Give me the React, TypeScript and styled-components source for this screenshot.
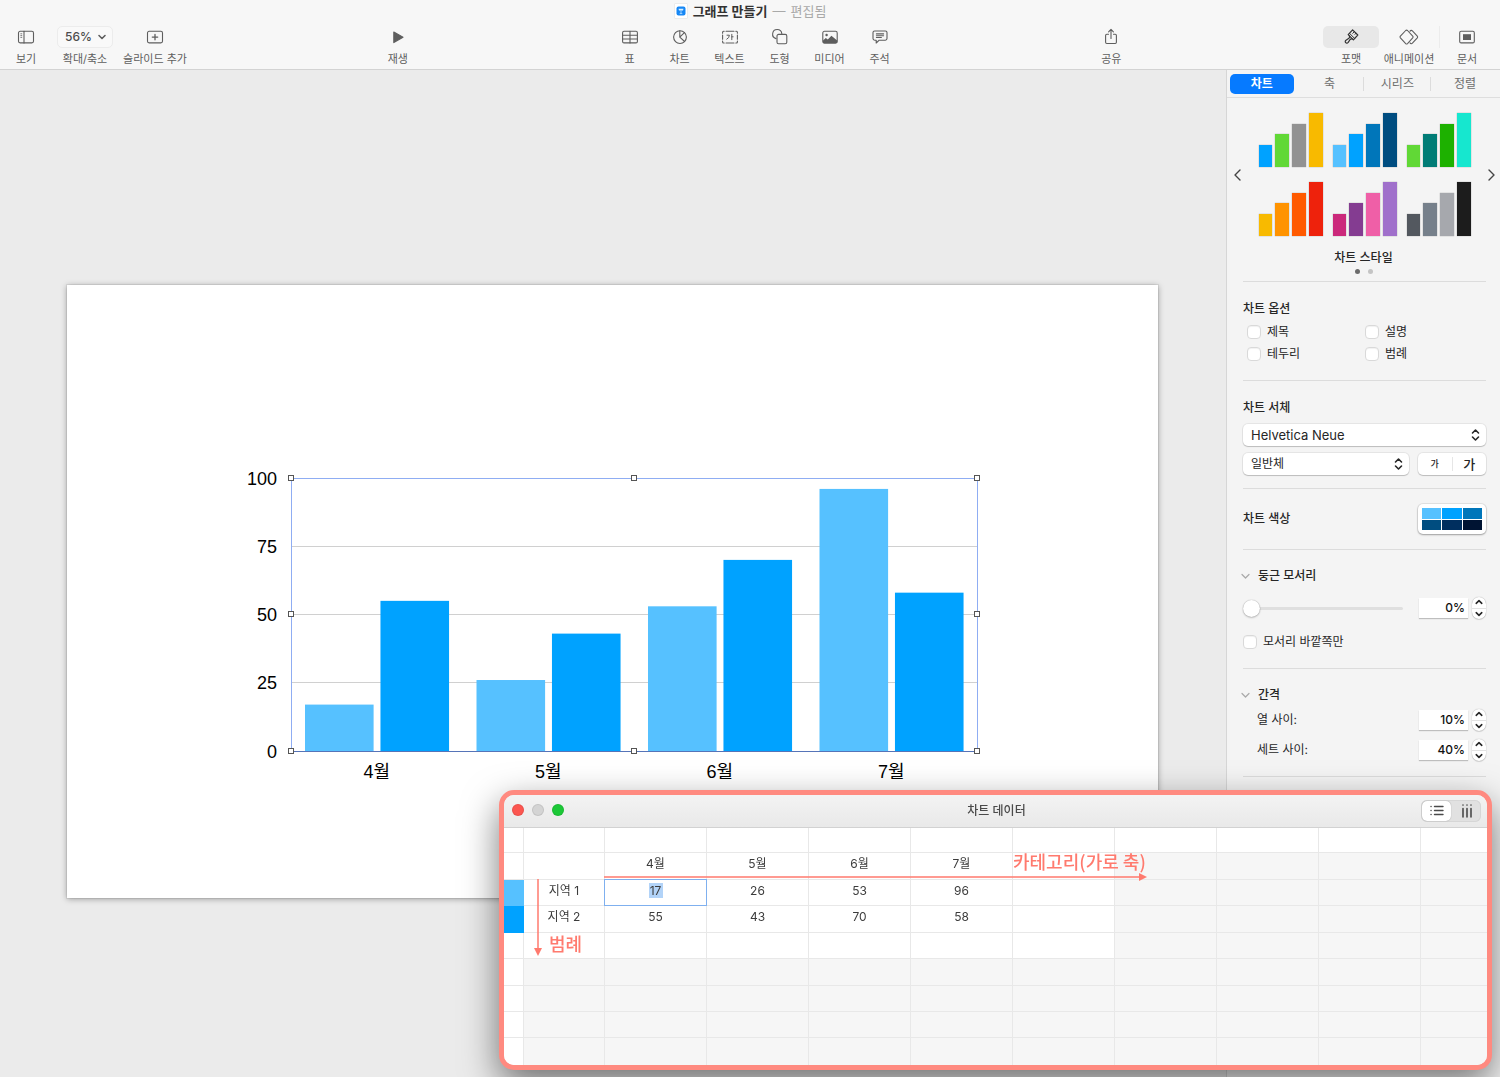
import React from "react";
import styled, { createGlobalStyle } from "styled-components";

const ui = `Inter, "Noto Sans CJK KR", sans-serif`;
const salmon = "#ff8a80";

const GlobalStyle = createGlobalStyle`
  *, *::before, *::after { box-sizing: border-box; }
  body { margin: 0; background: #ebebeb; color: #262626; font: 12px/20px ${ui}; }
  button, input, select { font: inherit; color: inherit; margin: 0; padding: 0; border: 0; background: none; outline: 0; }
  svg { display: block; flex: none; }
`;

const Page = styled.div`
  min-height: 100vh;
  display: flex;
  flex-direction: column;
  overflow: hidden;
`;

/* ---------- header ---------- */

const Header = styled.header`
  display: flex;
  flex-direction: column;
  gap: 4px;
  padding-bottom: 3px;
  background: #f7f7f7;
  border-bottom: 1px solid #d3d3d3;
`;

const TitleBar = styled.div`
  display: flex;
  align-items: center;
  justify-content: center;
  gap: 5px;
  height: 22px;
  font-size: 13px;
  color: #a9a9a9;
`;

const DocTitle = styled.h1`
  margin: 0;
  font-size: 13px;
  font-weight: 700;
  color: #333;
`;

const Toolbar = styled.div`
  display: flex;
  justify-content: space-between;
  padding: 0 10px 0 6px;
`;

const ToolGroup = styled.div<{ $gap?: number }>`
  display: flex;
  gap: ${(p) => p.$gap ?? 10}px;
`;

const Tool = styled.div<{ $width?: number }>`
  display: flex;
  flex-direction: column;
  align-items: center;
  gap: 4px;
  width: ${(p) => p.$width ?? 40}px;
  font-size: 11px;
  line-height: 14px;
  color: #5e5e5e;
  white-space: nowrap;
`;

const ToolButton = styled.button`
  display: flex;
  flex-direction: column;
  align-items: center;
  gap: 4px;
  width: 100%;
`;

const IconBox = styled.span<{ $active?: boolean }>`
  display: flex;
  align-items: center;
  justify-content: center;
  width: 100%;
  height: 22px;
  border-radius: 5px;
  background: ${(p) => (p.$active ? "#e8e8e8" : "transparent")};
  color: ${(p) => (p.$active ? "#333" : "#5e5e5e")};
`;

const ToolDivider = styled.span`
  width: 1px;
  height: 22px;
  background: #ececec;
`;

const SelectWrap = styled.span`
  position: relative;
  display: block;
  width: 100%;

  svg {
    position: absolute;
    top: 50%;
    right: 6px;
    transform: translateY(-50%);
    pointer-events: none;
  }
`;

const ZoomSelect = styled.select`
  appearance: none;
  width: 100%;
  height: 22px;
  padding-left: 7px;
  border: 1px solid #ececec;
  border-radius: 5px;
  background: #f9f9f9;
  font-size: 12px;
  font-weight: 500;
  color: #4c4c4c;
`;

/* ---------- body ---------- */

const Body = styled.div`
  flex: 1;
  display: flex;
`;

const Canvas = styled.main`
  flex: 1;
  min-width: 0;
  padding: 215px 68px 0 67px;
`;

const Slide = styled.section`
  aspect-ratio: 1091 / 613;
  padding: 180px 173px 0;
  background: #fff;
  box-shadow: 0 0 0 1px rgba(0, 0, 0, 0.06), 0 1px 6px rgba(0, 0, 0, 0.35);

  > svg {
    width: 100%;
    height: auto;
    overflow: visible;
  }
`;

const AxisText = styled.text`
  font: 18px "Liberation Sans", "Noto Sans CJK KR", sans-serif;
  fill: #000;
`;

/* ---------- inspector ---------- */

const Inspector = styled.aside`
  width: 274px;
  flex: none;
  background: #f4f4f4;
  border-left: 1px solid #d6d6d6;
`;

const Tabs = styled.nav`
  display: grid;
  grid-template-columns: repeat(4, 1fr);
  align-items: center;
  height: 28px;
  padding: 0 1px;
  border-bottom: 1px solid #dedede;
`;

const Tab = styled.button<{ $active?: boolean; $divided?: boolean }>`
  height: ${(p) => (p.$active ? 20 : 14)}px;
  margin: 0 ${(p) => (p.$active ? 2 : 0)}px;
  border-radius: ${(p) => (p.$active ? 5 : 0)}px;
  background: ${(p) => (p.$active ? "#067aff" : "none")};
  color: ${(p) => (p.$active ? "#fff" : "#6e6e6e")};
  font-weight: ${(p) => (p.$active ? 700 : 400)};
  line-height: 14px;
  box-shadow: ${(p) => (p.$divided ? "inset -1px 0 #dcdcdc" : "none")};
`;

const StylePicker = styled.div`
  display: flex;
  align-items: center;
  justify-content: space-between;
  padding: 15px 4px 0 6px;
`;

const Pager = styled.button`
  display: flex;
  color: #444;
`;

const StyleGrid = styled.div`
  display: grid;
  grid-template-columns: repeat(3, 64px);
  gap: 15px 10px;
`;

const StyleThumb = styled.button`
  display: grid;
  grid-template-columns: repeat(4, 1fr);
  gap: 3px;
  align-items: end;
  height: 54px;
`;

const ThumbBar = styled.span<{ $color: string; $height: number }>`
  height: ${(p) => p.$height}px;
  background: ${(p) => p.$color};
  box-shadow: 0 0 1px rgba(0, 0, 0, 0.4);
`;

const StyleCaption = styled.div`
  display: flex;
  flex-direction: column;
  align-items: center;
  gap: 1px;
  padding: 12px 0 7px;
  font-weight: 500;
`;

const Dots = styled.div`
  display: flex;
  gap: 8px;
`;

const Dot = styled.span<{ $on?: boolean }>`
  width: 5px;
  height: 5px;
  border-radius: 50%;
  background: ${(p) => (p.$on ? "#6b6b6b" : "#c4c4c4")};
`;

const Section = styled.section<{ $gap: number; $top?: number; $bottom?: number }>`
  display: flex;
  flex-direction: column;
  gap: ${(p) => p.$gap}px;
  margin: 0 14px 0 16px;
  padding: ${(p) => p.$top ?? 17}px 0 ${(p) => p.$bottom ?? 15}px;
  border-top: 1px solid #dcdcdc;
`;

const Heading = styled.h2<{ $open?: boolean }>`
  display: flex;
  align-items: center;
  gap: 8px;
  margin: 0 0 0 ${(p) => (p.$open ? -2 : 0)}px;
  font-size: 12px;
  line-height: 18px;
  font-weight: 500;
  color: #262626;

  svg { color: #a8a8a8; }
`;

const CheckGrid = styled.div`
  display: grid;
  grid-template-columns: 118px 1fr;
  padding-left: 4px;
`;

const CheckLabel = styled.label`
  display: flex;
  align-items: center;
  gap: 6px;
  height: 22px;
`;

const CheckBox = styled.input`
  appearance: none;
  width: 14px;
  height: 14px;
  border-radius: 4px;
  border: 1px solid #d9d9d9;
  background: #fff;
  box-shadow: inset 0 1px 1px rgba(0, 0, 0, 0.06);
`;

const Rows = styled.div`
  display: flex;
  flex-direction: column;
  gap: 8px;
`;

const Row = styled.div<{ $indent?: number }>`
  display: flex;
  align-items: center;
  justify-content: space-between;
  gap: 9px;
  padding-left: ${(p) => p.$indent ?? 0}px;
`;

const FormSelect = styled.select<{ $size?: number }>`
  appearance: none;
  display: block;
  width: 100%;
  height: 22px;
  padding-left: 8px;
  border-radius: 5px;
  background: #fff;
  font-size: ${(p) => p.$size ?? 12}px;
  line-height: 20px;
  box-shadow: 0 0 0 1px rgba(0, 0, 0, 0.06), 0 1px 1px rgba(0, 0, 0, 0.18);
`;

const Segments = styled.div`
  display: flex;
  align-items: center;
  flex: none;
  width: 68px;
  height: 22px;
  border-radius: 5px;
  background: #fff;
  box-shadow: 0 0 0 1px rgba(0, 0, 0, 0.06), 0 1px 1px rgba(0, 0, 0, 0.18);

  button { flex: 1; height: 14px; line-height: 14px; font-weight: 500; }
  button + button { border-left: 1px solid #e6e6e6; }
`;

const SizeButton = styled.button<{ $size: number }>`
  font-size: ${(p) => p.$size}px;
`;

const ColorWell = styled.button`
  display: grid;
  grid-template-columns: repeat(3, 1fr);
  gap: 1px;
  width: 68px;
  height: 30px;
  padding: 4px;
  border-radius: 5px;
  background: #fff;
  box-shadow: 0 0 0 1px rgba(0, 0, 0, 0.07), 0 1px 2px rgba(0, 0, 0, 0.3);
`;

const Swatch = styled.span<{ $color: string }>`
  height: 100%;
  min-height: 10px;
  background: ${(p) => p.$color};
`;

const Slider = styled.input`
  appearance: none;
  width: 160px;
  height: 20px;

  &::-webkit-slider-runnable-track {
    height: 3px;
    border-radius: 2px;
    background: #dfdfdf;
  }
  &::-webkit-slider-thumb {
    appearance: none;
    width: 17px;
    height: 17px;
    margin-top: -7px;
    border-radius: 50%;
    background: #fff;
    box-shadow: 0 0 1px rgba(0, 0, 0, 0.4), 0 1px 2px rgba(0, 0, 0, 0.2);
  }
`;

const NumberGroup = styled.span`
  display: flex;
  align-items: center;
  gap: 4px;
`;

const NumberInput = styled.input`
  width: 49px;
  height: 20px;
  padding-right: 3px;
  background: #fff;
  text-align: right;
  font-weight: 500;
  color: #111;
  box-shadow: 0 1px 1px rgba(0, 0, 0, 0.22);
`;

const Stepper = styled.span`
  display: flex;
  flex-direction: column;
  width: 14px;
  height: 22px;
  border-radius: 7px;
  background: #fff;
  overflow: hidden;
  box-shadow: 0 0 1px rgba(0, 0, 0, 0.4), 0 1px 1px rgba(0, 0, 0, 0.12);

  button { flex: 1; display: flex; align-items: center; justify-content: center; }
  button + button { border-top: 1px solid #e2e2e2; }
`;

/* ---------- chart data window ---------- */

const DataWindow = styled.section`
  position: fixed;
  right: 8px;
  bottom: 7px;
  width: 993px;
  border: 5px solid ${salmon};
  border-radius: 15px;
  background: #f6f6f6;
  box-shadow: 0 14px 36px rgba(0, 0, 0, 0.52);
`;

const WindowBar = styled.div`
  display: grid;
  grid-template-columns: 1fr auto 1fr;
  align-items: center;
  height: 33px;
  padding: 0 6px 0 8px;
  border-bottom: 1px solid #d2d2d2;
  border-radius: 10px 10px 0 0;
  background: linear-gradient(#f3f3f3, #e9e9e9);
  color: #4a4a4a;
`;

const Lights = styled.div`
  display: flex;
  gap: 8px;
  padding-bottom: 2px;
`;

const Light = styled.button<{ $color: string }>`
  width: 12px;
  height: 12px;
  border-radius: 50%;
  background: ${(p) => p.$color};
  box-shadow: inset 0 0 0 1px rgba(0, 0, 0, 0.08);
`;

const WindowTitle = styled.h2`
  margin: 0;
  font-size: 12px;
  font-weight: 500;
`;

const ViewToggle = styled.div`
  justify-self: end;
  display: flex;
  width: 60px;
  height: 22px;
  border-radius: 6px;
  background: #e1e1e1;
  box-shadow: inset 0 0 0 1px #d6d6d6;
`;

const ViewButton = styled.button<{ $active?: boolean }>`
  flex: 1;
  display: flex;
  align-items: center;
  justify-content: center;
  margin: ${(p) => (p.$active ? 1 : 0)}px;
  border-radius: 5px;
  background: ${(p) => (p.$active ? "#fff" : "none")};
  box-shadow: ${(p) => (p.$active ? "0 0 1px rgba(0, 0, 0, 0.4)" : "none")};
`;

const Sheet = styled.div`
  position: relative;
  overflow: hidden;
  border-radius: 0 0 10px 10px;
`;

const Table = styled.table`
  width: 100%;
  height: 237px;
  table-layout: fixed;
  border-collapse: separate;
  border-spacing: 0;
`;

const TableRow = styled.tr<{ $first?: boolean }>`
  height: ${(p) => (p.$first ? 25 : 26)}px;
`;

const Cell = styled.td<{ $filled?: boolean; $selected?: boolean }>`
  padding: 0 0 4px;
  border: solid ${(p) => (p.$selected ? "#7fb0ef" : "#e8e8e8")};
  border-width: 0 1px 1px 0;
  background: ${(p) => (p.$filled ? "#fff" : "#f6f6f6")};
  box-shadow: ${(p) => (p.$selected ? "-1px 0 #7fb0ef, 0 -1px #7fb0ef, -1px -1px #7fb0ef" : "none")};
  position: ${(p) => (p.$selected ? "relative" : "static")};
  text-align: center;
  line-height: 16px;
  font-weight: 400;
  color: #3c3c3c;

  &:last-child { border-right: 0; }
  tr:last-child > & { border-bottom: 0; }
`;

const ColorCell = styled(Cell)<{ $color?: string }>`
  background: ${(p) => p.$color ?? "#fff"};
  border-color: ${(p) => p.$color ?? "#e8e8e8"};
`;

const CellInput = styled.input`
  display: block;
  width: 14px;
  height: 15px;
  margin: 0 auto;
  background: #b2d3f8;
  text-align: center;
`;

const Note = styled.span<{ $x: number; $y: number }>`
  position: absolute;
  left: ${(p) => p.$x}px;
  top: ${(p) => p.$y}px;
  font: 500 18px/24px "Noto Sans CJK KR", sans-serif;
  color: #ff7a6e;
  white-space: nowrap;
`;

const Arrows = styled.svg`
  position: absolute;
  left: 0;
  top: 0;
  pointer-events: none;
`;

/* ---------- icons ---------- */

type IconProps = { w?: number; h?: number; children: React.ReactNode };
const Icon = ({ w = 18, h = 18, children }: IconProps) => (
  <svg width={w} height={h} viewBox={`0 0 ${w} ${h}`} fill="none" stroke="currentColor" strokeWidth="1.1" strokeLinecap="round" strokeLinejoin="round" aria-hidden="true">
    {children}
  </svg>
);

const ViewIcon = () => (
  <Icon><rect x="1.5" y="3.3" width="15" height="11.6" rx="1.6" /><path d="M7 3.3v11.6" /><path d="M3.8 5.8h1M3.8 7.6h1M3.8 9.4h1" strokeWidth=".8" /></Icon>
);
const AddSlideIcon = () => (
  <Icon><rect x="1.5" y="3.3" width="15" height="11.6" rx="1.6" /><path d="M9 6.4v5.4M6.3 9.1h5.4" strokeWidth="1.3" /></Icon>
);
const PlayIcon = () => (
  <Icon><path d="M4.8 4v10.6L14 9.3z" fill="currentColor" /></Icon>
);
const TableIcon = () => (
  <Icon><rect x="1.6" y="3.3" width="14.8" height="11.6" rx="1.4" /><path d="M1.6 7.2h14.8M1.6 11h14.8M9 3.3v11.6" /></Icon>
);
const ChartIcon = () => (
  <Icon><circle cx="9" cy="9.1" r="6.4" /><path d="M8.8 2.7v6.4l4.8 4.4M8.8 9.1l4.6-4.4" /></Icon>
);
const TextIcon = () => (
  <Icon>
    <path d="M3.2 3.2h-.6q-1 0-1 1v1M14.8 3.2h.6q1 0 1 1v1M3.2 15h-.6q-1 0-1-1v-1M14.8 15h.6q1 0 1-1v-1M5 3.2h8M5 15h8M1.6 7v4.2M16.4 7v4.2" />
    <path d="M6 7.2h2.4q0 2.6-2.6 4M10.8 6.3v5.4M10.8 8.8h1.3" strokeWidth="1" />
  </Icon>
);
const ShapeIcon = () => (
  <Icon><path d="M5 10.6A4.6 4.6 0 1 1 10.8 5.6" /><rect x="6" y="6.4" width="9.8" height="9.4" rx="1.6" /></Icon>
);
const MediaIcon = () => (
  <Icon>
    <rect x="1.8" y="3.3" width="14.4" height="11.8" rx="1.6" />
    <circle cx="5.6" cy="7" r="1.2" fill="currentColor" stroke="none" />
    <path d="M2 12.4l2.8-2.3 2 1.4 3.6-3.8 5.8 4.8v2q0 .6-.8.6H2.6q-.6 0-.6-.6z" fill="currentColor" stroke="none" />
  </Icon>
);
const CommentIcon = () => (
  <Icon><path d="M3.6 3h10.8q1.6 0 1.6 1.6v6q0 1.6-1.6 1.6H8.2L5.2 15v-2.8H3.6Q2 12.2 2 10.6v-6Q2 3 3.6 3zM5.4 5.9h7.2M5.4 7.7h7.2M5.4 9.5h5" /></Icon>
);
const ShareIcon = () => (
  <Icon><path d="M6.5 6.3H4.8q-1.2 0-1.2 1.2v6.8q0 1.2 1.2 1.2h8.4q1.2 0 1.2-1.2V7.5q0-1.2-1.2-1.2h-1.7M9 10.5V1.5M6.6 3.8L9 1.4l2.4 2.4" /></Icon>
);
const BrushIcon = () => (
  <Icon>
    <path d="M10.6 1.8L15.8 7 11.4 11.8 6.2 6.600z" strokeWidth="1.2" />
    <path d="M12.400 3.600l-1.600 1.700M14 5.200l-1 1.100M7.500 5.300l5.200 5.200" strokeWidth="1" />
    <path d="M7.400 7.900q.6 1.500-.5 2.400L4 12.200q-1.400 1.400-.3 2.500t2.500-.3l1.900-2.900q.9-1.100 2.400-.5" strokeWidth="1.200" />
  </Icon>
);
const MotionIcon = () => (
  <Icon w={20}>
    <path d="M6.7 2.5q.9-.8 1.8 0l5.2 5.700q.7.800 0 1.700L8.500 15.600q-.9.800-1.800 0L1.400 9.900q-.7-.8 0-1.700z" />
    <path d="M11 3.200q1.200-1.500 2.400-.3l4.900 5.300q.7.800 0 1.700l-4.900 5.300q-1.200 1.200-2.400-.3" />
  </Icon>
);
const DocIcon = () => (
  <Icon><rect x="1.7" y="3.3" width="14.6" height="11.6" rx="1.4" /><rect x="5" y="6.2" width="8" height="5.8" fill="currentColor" stroke="none" /></Icon>
);
const AppIcon = () => (
  <svg width="14" height="16" viewBox="0 0 14 16" aria-hidden="true">
    <rect x=".5" y=".5" width="13" height="15" rx="1" fill="#fff" stroke="#e2e2e2" strokeWidth=".6" />
    <rect x="2.5" y="3.5" width="9" height="9" rx="2" fill="#1687f5" />
    <path d="M4.5 5.8h5l-.5 1.8H5z" fill="#d9efff" />
    <path d="M7 7.6v2.8M5.7 10.6h2.6" stroke="#bfe3ff" strokeWidth=".8" />
  </svg>
);
const Chevron = ({ d, w = 10, h = 10, s = 1.6 }: { d: string; w?: number; h?: number; s?: number }) => (
  <svg width={w} height={h} viewBox={`0 0 ${w} ${h}`} fill="none" stroke="currentColor" strokeWidth={s} strokeLinecap="round" strokeLinejoin="round" aria-hidden="true">
    <path d={d} />
  </svg>
);
const UpDown = () => <Chevron w={9} h={14} d="M1.5 5L4.5 2 7.5 5M1.5 9L4.5 12 7.5 9" />;

/* ---------- data ---------- */

const months = ["4월", "5월", "6월", "7월"];
const series = [
  { name: "지역 1", color: "#56c1ff", values: [17, 26, 53, 96] },
  { name: "지역 2", color: "#00a2ff", values: [55, 43, 70, 58] },
];

const chartStyles = [
  ["#00a2ff", "#61d836", "#929292", "#f8ba00"],
  ["#56c1ff", "#00a2ff", "#0076ba", "#004d80"],
  ["#61d836", "#017c76", "#1db100", "#16e7cf"],
  ["#f8ba00", "#ff9300", "#ff5a00", "#ee220c"],
  ["#cb297b", "#843c91", "#ef5fa7", "#a070cb"],
  ["#53585f", "#76808b", "#a6a8ad", "#1c1c1c"],
];
const thumbHeights = [22, 33, 43, 54];
const wellColors = ["#56c1ff", "#00a2ff", "#0076ba", "#004d80", "#002f5f", "#001433"];

const insertTools: [string, React.FC][] = [
  ["표", TableIcon],
  ["차트", ChartIcon],
  ["텍스트", TextIcon],
  ["도형", ShapeIcon],
  ["미디어", MediaIcon],
  ["주석", CommentIcon],
];

/* ---------- parts ---------- */

const ToolItem = ({ label, icon: Glyph, width, active }: { label: string; icon: React.FC; width?: number; active?: boolean }) => (
  <Tool $width={width}>
    <ToolButton type="button">
      <IconBox $active={active}><Glyph /></IconBox>
      {label}
    </ToolButton>
  </Tool>
);

const plot = { left: 51, top: 13, width: 686, height: 273 };

const BarChart = () => {
  const groupWidth = plot.width / months.length;
  const barWidth = groupWidth * 0.4;
  const baseline = plot.top + plot.height;
  const xs = [plot.left, plot.left + plot.width / 2, plot.left + plot.width];
  const ys = [plot.top, plot.top + Math.floor(plot.height / 2), baseline];
  return (
    <svg viewBox="0 0 745 325" role="img" aria-label="월별 지역 차트">
      {[100, 75, 50, 25, 0].map((v) => {
        const y = Math.floor(baseline - (v / 100) * plot.height);
        return (
          <g key={v}>
            <line x1={plot.left} x2={plot.left + plot.width} y1={y + 0.5} y2={y + 0.5} stroke="#d0d0d0" />
            <AxisText x="37" y={y + 7} textAnchor="end">{v}</AxisText>
          </g>
        );
      })}
      {months.map((m, i) => (
        <g key={m}>
          {series.map((s, j) => {
            const h = (s.values[i] / 100) * plot.height;
            return <rect key={s.name} x={plot.left + 14 + i * groupWidth + j * barWidth * 1.1} y={baseline - h} width={barWidth} height={h} fill={s.color} />;
          })}
          <AxisText x={plot.left + groupWidth * (i + 0.5)} y="313" textAnchor="middle">{m}</AxisText>
        </g>
      ))}
      <rect x={plot.left + 0.5} y={plot.top + 0.5} width={plot.width} height={plot.height} fill="none" stroke="#8fadf3" />
      <line x1={plot.left} x2={plot.left + plot.width} y1={baseline + 0.5} y2={baseline + 0.5} stroke="#5674b8" />
      {xs.map((x, i) =>
        ys.map((y, j) =>
          i === 1 && j === 1 ? null : (
            <rect key={`${i}-${j}`} x={x - 2.5} y={y - 2.5} width="5" height="5" fill="#fff" stroke="#555" />
          )
        )
      )}
    </svg>
  );
};

const Percent = ({ id, label, value }: { id: string; label?: string; value: string }) => (
  <NumberGroup>
    <NumberInput id={id} aria-label={label} defaultValue={value} />
    <Stepper>
      <button type="button" aria-label="증가"><Chevron w={8} h={6} d="M1.2 4.3L4 1.7 6.8 4.3" /></button>
      <button type="button" aria-label="감소"><Chevron w={8} h={6} d="M1.2 1.7L4 4.3 6.8 1.7" /></button>
    </Stepper>
  </NumberGroup>
);

const Check = ({ label }: { label: string }) => (
  <CheckLabel><CheckBox type="checkbox" />{label}</CheckLabel>
);

const OpenArrow = () => <Chevron w={9} h={8} s={1.2} d="M1 2.5L4.5 6 8 2.5" />;

const InspectorPanel = () => (
  <Inspector>
    <Tabs>
      <Tab type="button" $active>차트</Tab>
      <Tab type="button" $divided>축</Tab>
      <Tab type="button" $divided>시리즈</Tab>
      <Tab type="button">정렬</Tab>
    </Tabs>
    <StylePicker>
      <Pager type="button" aria-label="이전"><Chevron w={9} h={14} s={1.4} d="M7 2L2 7 7 12" /></Pager>
      <StyleGrid>
        {chartStyles.map((colors, i) => (
          <StyleThumb type="button" key={i} aria-label={`차트 스타일 ${i + 1}`}>
            {colors.map((c, j) => <ThumbBar key={j} $color={c} $height={thumbHeights[j]} />)}
          </StyleThumb>
        ))}
      </StyleGrid>
      <Pager type="button" aria-label="다음"><Chevron w={9} h={14} s={1.4} d="M2 2L7 7 2 12" /></Pager>
    </StylePicker>
    <StyleCaption>
      차트 스타일
      <Dots><Dot $on /><Dot /></Dots>
    </StyleCaption>

    <Section $gap={3} $top={18}>
      <Heading>차트 옵션</Heading>
      <CheckGrid>
        <Check label="제목" />
        <Check label="설명" />
        <Check label="테두리" />
        <Check label="범례" />
      </CheckGrid>
    </Section>

    <Section $gap={7} $top={18} $bottom={13}>
      <Heading>차트 서체</Heading>
      <SelectWrap>
        <FormSelect aria-label="서체" $size={13}><option>Helvetica Neue</option></FormSelect>
        <UpDown />
      </SelectWrap>
      <Row>
        <SelectWrap>
          <FormSelect aria-label="서체 스타일"><option>일반체</option></FormSelect>
          <UpDown />
        </SelectWrap>
        <Segments>
          <SizeButton type="button" $size={9}>가</SizeButton>
          <SizeButton type="button" $size={13}>가</SizeButton>
        </Segments>
      </Row>
    </Section>

    <Section $gap={0} $top={15}>
      <Row>
        <Heading>차트 색상</Heading>
        <ColorWell type="button" aria-label="차트 색상">
          {wellColors.map((c) => <Swatch key={c} $color={c} />)}
        </ColorWell>
      </Row>
    </Section>

    <Section $gap={12}>
      <Heading $open><OpenArrow />둥근 모서리</Heading>
      <Row>
        <Slider type="range" min="0" max="100" defaultValue="0" aria-label="둥근 모서리" />
        <Percent id="corner" label="둥근 모서리 값" value="0%" />
      </Row>
      <Check label="모서리 바깥쪽만" />
    </Section>

    <Section $gap={5}>
      <Heading $open><OpenArrow />간격</Heading>
      <Rows>
        <Row $indent={14}>
          <label htmlFor="columns">열 사이:</label>
          <Percent id="columns" value="10%" />
        </Row>
        <Row $indent={14}>
          <label htmlFor="sets">세트 사이:</label>
          <Percent id="sets" value="40%" />
        </Row>
      </Rows>
    </Section>
    <Section $gap={0} />
  </Inspector>
);

const blanks = (n: number) => Array.from({ length: n }, (_, i) => i);

const ChartData = () => (
  <DataWindow aria-label="차트 데이터">
    <WindowBar>
      <Lights>
        <Light type="button" aria-label="닫기" $color="#fc5650" />
        <Light type="button" aria-label="최소화" $color="#d4d4d4" />
        <Light type="button" aria-label="확대" $color="#1cc837" />
      </Lights>
      <WindowTitle>차트 데이터</WindowTitle>
      <ViewToggle>
        <ViewButton type="button" $active aria-label="행">
          <Icon w={14} h={14}><path d="M4.5 2.5h8.5M4.5 6.5h8.5M4.5 10.5h8.5M1 2.5h.1M1 6.5h.1M1 10.5h.1" strokeWidth="1.4" /></Icon>
        </ViewButton>
        <ViewButton type="button" aria-label="열">
          <Icon w={14} h={14}><path d="M3 4.500v8.500M7 4.500v8.500M11 4.500v8.500M3 1v.1M7 1v.1M11 1v.1" strokeWidth="1.600" /></Icon>
        </ViewButton>
      </ViewToggle>
    </WindowBar>
    <Sheet>
      <Table>
        <colgroup>
          <col style={{ width: 20 }} />
          <col style={{ width: 81 }} />
          {blanks(8).map((i) => <col key={i} style={{ width: 102 }} />)}
          <col />
        </colgroup>
        <tbody>
          <TableRow $first>
            <ColorCell />
            {blanks(10).map((i) => <Cell key={i} $filled />)}
          </TableRow>
          <TableRow>
            <ColorCell />
            <Cell $filled />
            {months.map((m) => <Cell as="th" scope="col" key={m} $filled>{m}</Cell>)}
            <Cell $filled />
            {blanks(4).map((i) => <Cell key={i} />)}
          </TableRow>
          {series.map((s, row) => (
            <TableRow key={s.name}>
              <ColorCell $color={s.color} />
              <Cell as="th" scope="row" $filled>{s.name}</Cell>
              {s.values.map((v, i) => {
                const selected = row === 0 && i === 0;
                return (
                  <Cell key={i} $filled $selected={selected}>
                    {selected ? <CellInput aria-label={`${s.name} ${months[i]}`} defaultValue={v} /> : v}
                  </Cell>
                );
              })}
              <Cell $filled />
              {blanks(4).map((i) => <Cell key={i} />)}
            </TableRow>
          ))}
          {blanks(5).map((row) => (
            <TableRow key={row}>
              <ColorCell />
              {blanks(10).map((i) => <Cell key={i} $filled={row === 0 && i < 6} />)}
            </TableRow>
          ))}
        </tbody>
      </Table>
      <Arrows width="660" height="140" viewBox="0 0 660 140" aria-hidden="true">
        <path d="M100 49h536M34 51v70" stroke="#ff7a6e" strokeWidth="1.500" />
        <path d="M635 45l8 4-8 4zM30 120l4 8 4-8z" fill="#ff7a6e" />
      </Arrows>
      <Note $x={509} $y={21}>카테고리(가로 축)</Note>
      <Note $x={45} $y={103}>범례</Note>
    </Sheet>
  </DataWindow>
);

export default function App() {
  return (
    <Page>
      <GlobalStyle />
      <Header>
        <TitleBar>
          <AppIcon />
          <DocTitle>그래프 만들기</DocTitle>
          <span>—</span>
          <span>편집됨</span>
        </TitleBar>
        <Toolbar>
          <ToolGroup $gap={11}>
            <ToolItem label="보기" icon={ViewIcon} />
            <Tool $width={56}>
              <SelectWrap>
                <ZoomSelect id="zoom"><option>56%</option></ZoomSelect>
                <Chevron w={10} h={8} d="M2 2.5L5 5.5 8 2.5" />
              </SelectWrap>
              <label htmlFor="zoom">확대/축소</label>
            </Tool>
            <ToolItem label="슬라이드 추가" icon={AddSlideIcon} width={62} />
          </ToolGroup>
          <ToolItem label="재생" icon={PlayIcon} />
          <ToolGroup>
            {insertTools.map(([label, icon]) => <ToolItem key={label} label={label} icon={icon} />)}
          </ToolGroup>
          <ToolItem label="공유" icon={ShareIcon} />
          <ToolGroup $gap={4}>
            <ToolItem label="포맷" icon={BrushIcon} width={56} active />
            <ToolItem label="애니메이션" icon={MotionIcon} width={52} />
            <ToolDivider />
            <ToolItem label="문서" icon={DocIcon} width={46} />
          </ToolGroup>
        </Toolbar>
      </Header>
      <Body>
        <Canvas>
          <Slide><BarChart /></Slide>
        </Canvas>
        <InspectorPanel />
      </Body>
      <ChartData />
    </Page>
  );
}
